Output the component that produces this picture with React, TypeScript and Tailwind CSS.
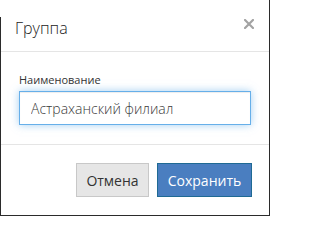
export default function App() {
  return (
    <div
      className="flex w-[270px] h-[216px] bg-[#2b2b2b] overflow-hidden"
      style={{ fontFamily: '"Open Sans", "Liberation Sans", sans-serif' }}
    >
      {/* left edge: white at the top, backdrop below */}
      <div className="flex flex-col w-[1px] h-[215px]">
        <div className="h-[17px] bg-white" />
        <div className="flex-1 bg-[#2b2b2b]" />
      </div>

      <div className="flex flex-col w-[268px] h-[215px] bg-white">
        {/* Header */}
        <div className="flex items-start justify-between pl-[14px] pr-[15px] pt-[15px] pb-[10px] border-b border-[#e5e5e5]">
          <h4 className="text-[16px] leading-[26px] font-light text-[#222]">Группа</h4>
          <button className="mt-[4px] text-[#a3a3a3]">
            <svg width="10" height="10" viewBox="0 0 10 10">
              <path d="M1 1 L9 9 M9 1 L1 9" stroke="currentColor" strokeWidth="2.2" strokeLinecap="square" />
            </svg>
          </button>
        </div>

        {/* Body */}
        <div className="flex flex-col pl-[18px] pt-[19px] pb-[19px] border-b border-[#e5e5e5]">
          <label className="text-[11px] leading-[17px] text-[#333] mb-[3px]">Наименование</label>
          <input
            className="w-[232px] h-[34px] px-[11px] text-[14px] font-light text-[#3a3a3a] border border-[#66afe9] outline-none shadow-[inset_0_1px_1px_rgba(0,0,0,0.075),0_0_8px_rgba(102,175,233,0.6)]"
            defaultValue="Астраханский филиал"
          />
        </div>

        {/* Footer */}
        <div className="flex justify-end gap-[8px] pt-[18px] pr-[17px]">
          <button className="w-[73px] h-[34px] text-[14px] text-[#333] bg-[#e6e6e6] border border-[#c8c8c8]">
            Отмена
          </button>
          <button className="w-[95px] h-[34px] text-[14px] text-white bg-[#4a7ec0] border border-[#1f6a94]">
            Сохранить
          </button>
        </div>
      </div>
    </div>
  );
}
